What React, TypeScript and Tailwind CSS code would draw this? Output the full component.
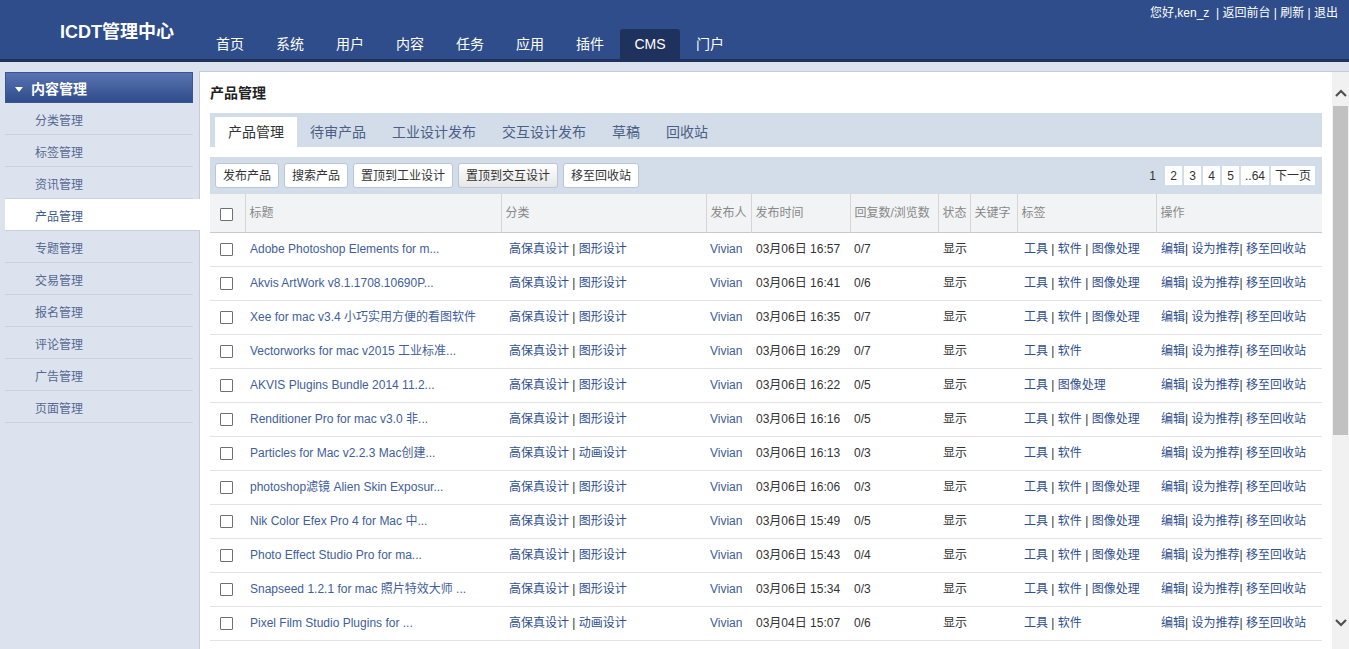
import React from "react";

const navItems = ["首页", "系统", "用户", "内容", "任务", "应用", "插件", "CMS", "门户"];
const sideItems = ["分类管理", "标签管理", "资讯管理", "产品管理", "专题管理", "交易管理", "报名管理", "评论管理", "广告管理", "页面管理"];
const tabs = ["产品管理", "待审产品", "工业设计发布", "交互设计发布", "草稿", "回收站"];
const buttons = ["发布产品", "搜索产品", "置顶到工业设计", "置顶到交互设计", "移至回收站"];

const rows = [
  { t: "Adobe Photoshop Elements for m...", c: ["高保真设计", "图形设计"], d: "03月06日 16:57", n: "0/7", tags: ["工具", "软件", "图像处理"] },
  { t: "Akvis ArtWork v8.1.1708.10690P...", c: ["高保真设计", "图形设计"], d: "03月06日 16:41", n: "0/6", tags: ["工具", "软件", "图像处理"] },
  { t: "Xee for mac v3.4 小巧实用方便的看图软件", c: ["高保真设计", "图形设计"], d: "03月06日 16:35", n: "0/7", tags: ["工具", "软件", "图像处理"] },
  { t: "Vectorworks for mac v2015 工业标准...", c: ["高保真设计", "图形设计"], d: "03月06日 16:29", n: "0/7", tags: ["工具", "软件"] },
  { t: "AKVIS Plugins Bundle 2014 11.2...", c: ["高保真设计", "图形设计"], d: "03月06日 16:22", n: "0/5", tags: ["工具", "图像处理"] },
  { t: "Renditioner Pro for mac v3.0 非...", c: ["高保真设计", "图形设计"], d: "03月06日 16:16", n: "0/5", tags: ["工具", "软件", "图像处理"] },
  { t: "Particles for Mac v2.2.3 Mac创建...", c: ["高保真设计", "动画设计"], d: "03月06日 16:13", n: "0/3", tags: ["工具", "软件"] },
  { t: "photoshop滤镜 Alien Skin Exposur...", c: ["高保真设计", "图形设计"], d: "03月06日 16:06", n: "0/3", tags: ["工具", "软件", "图像处理"] },
  { t: "Nik Color Efex Pro 4 for Mac 中...", c: ["高保真设计", "图形设计"], d: "03月06日 15:49", n: "0/5", tags: ["工具", "软件", "图像处理"] },
  { t: "Photo Effect Studio Pro for ma...", c: ["高保真设计", "图形设计"], d: "03月06日 15:43", n: "0/4", tags: ["工具", "软件", "图像处理"] },
  { t: "Snapseed 1.2.1 for mac 照片特效大师 ...", c: ["高保真设计", "图形设计"], d: "03月06日 15:34", n: "0/3", tags: ["工具", "软件", "图像处理"] },
  { t: "Pixel Film Studio Plugins for ...", c: ["高保真设计", "动画设计"], d: "03月04日 15:07", n: "0/6", tags: ["工具", "软件"] },
];

const cols = [
  { label: "", w: "w-[35px]" },
  { label: "标题", w: "w-[256px]" },
  { label: "分类", w: "w-[205px]" },
  { label: "发布人", w: "w-[45px]" },
  { label: "发布时间", w: "w-[99px]" },
  { label: "回复数/浏览数", w: "w-[88px]" },
  { label: "状态", w: "w-[32px]" },
  { label: "关键字", w: "w-[47px]" },
  { label: "标签", w: "w-[139px]" },
  { label: "操作", w: "w-[166px]" },
];

function Box() {
  return <span className="inline-block h-[13px] w-[13px] rounded-[1px] border border-[#707070] bg-white align-middle" />;
}

function Joined({ items }: { items: string[] }) {
  return (
    <>
      {items.map((s, i) => (
        <React.Fragment key={i}>
          {i > 0 && <span className="text-[#333]"> | </span>}
          <span>{s}</span>
        </React.Fragment>
      ))}
    </>
  );
}

function Chevron({ up }: { up?: boolean }) {
  return (
    <svg viewBox="0 0 12 8" className="h-[8px] w-[12px]" fill="none" stroke="#505050" strokeWidth="2.2">
      <path d={up ? "M1 7l5-5 5 5" : "M1 1l5 5 5-5"} />
    </svg>
  );
}

export default function App() {
  return (
    <div className="flex h-[649px] w-[1349px] flex-col overflow-hidden bg-[#dde3ee] font-['Liberation_Sans','Noto_Sans_CJK_SC',sans-serif] text-[12px] text-[#333]">
      {/* Header */}
      <header className="flex h-[62px] shrink-0 border-b-[3px] border-[#1f325d] bg-[#2e4d8a]">
        <div className="w-[200px] shrink-0 pl-[60px] pt-[20px] text-[18px] font-bold leading-[24px] text-white">ICDT管理中心</div>
        <nav className="flex self-end">
          {navItems.map((n) => (
            <div
              key={n}
              className={`flex h-[30px] w-[60px] items-center justify-center rounded-t-[3px] text-[14px] text-white ${n === "CMS" ? "bg-[#1f325d]" : ""}`}
            >
              {n}
            </div>
          ))}
        </nav>
        <div className="ml-auto self-start pr-[11px] pt-[5px] leading-[16px] text-white">
          您好,ken_z&nbsp; | 返回前台 | 刷新 | 退出
        </div>
      </header>

      {/* Body */}
      <div className="flex min-h-0 flex-1 pt-[9px]">
        {/* Sidebar */}
        <aside className="relative z-10 w-[199px] shrink-0 pl-[5px] pt-[1px]">
          <div className="flex h-[31px] w-[188px] items-center border border-[#3a5592] bg-gradient-to-b from-[#5974b0] to-[#2f4c8b] pl-[9px] pt-[3px] text-[14px] font-bold text-white">
            <svg viewBox="0 0 8 5" className="mr-[8px] h-[5px] w-[8px]" fill="#fff">
              <path d="M0 0h8L4 5z" />
            </svg>
            内容管理
          </div>
          {sideItems.map((s) => (
            <div
              key={s}
              className={`flex h-[32px] items-center border-b border-[#c9d1df] pl-[30px] pt-[4px] ${
                s === "产品管理" ? "w-[195px] bg-white text-[#3d5a8c]" : "w-[188px] text-[#556891]"
              }`}
            >
              {s}
            </div>
          ))}
        </aside>

        {/* Main panel */}
        <main className="flex min-w-0 flex-1 border-l border-t border-[#c3cbd8] bg-white">
          <div className="min-w-0 flex-1 px-[10px]">
            <div className="flex h-[41px] items-center pt-[1px] text-[14px] font-bold text-[#222]">产品管理</div>

            <div className="flex h-[34px] items-end bg-[#d3dce9] pl-[5px]">
              {tabs.map((t, i) => (
                <div
                  key={t}
                  className={`flex h-[30px] items-center px-[13px] pt-[1px] text-[14px] ${i === 0 ? "bg-white text-[#333]" : "text-[#4b5f86]"}`}
                >
                  {t}
                </div>
              ))}
            </div>

            <div className="mt-[10px] flex h-[37px] items-center justify-between bg-[#d3dce9] px-[5px]">
              <div className="flex gap-[5px]">
                {buttons.map((b, i) => (
                  <div
                    key={b}
                    className={`flex h-[25px] items-center rounded-[3px] border border-[#b9c5d9] px-[7px] ${
                      i === 3 ? "bg-gradient-to-b from-white to-[#e6e6e6]" : "bg-white"
                    }`}
                  >
                    {b}
                  </div>
                ))}
              </div>
              <div className="mr-[2px] flex items-center gap-[2px]">
                <span className="mr-[7px]">1</span>
                {["2", "3", "4", "5", "..64", "下一页"].map((p) => (
                  <span key={p} className="flex h-[19px] min-w-[17px] items-center justify-center bg-white px-[4px]">
                    {p}
                  </span>
                ))}
              </div>
            </div>

            <table className="w-full table-fixed border-collapse">
              <thead>
                <tr className="h-[38px] border-b border-[#c8c8c8] bg-[#f2f3f5] text-left text-[#888]">
                  {cols.map((c, i) => (
                    <th
                      key={i}
                      className={`${c.w} overflow-visible whitespace-nowrap border-l border-[#d5d5d5] pt-[1px] font-normal first:border-l-0 ${
                        i === 0 ? "pl-[10px]" : "pl-[4px]"
                      }`}
                    >
                      {i === 0 ? <Box /> : c.label}
                    </th>
                  ))}
                </tr>
              </thead>
              <tbody>
                {rows.map((r, i) => (
                  <tr key={i} className="h-[34px] border-b border-[#e3e3e3]">
                    <td className="pl-[10px]">
                      <Box />
                    </td>
                    <td className="truncate px-[5px] text-[#41609b]">{r.t}</td>
                    <td className="pl-[8px] text-[#2f4f8f]">
                      <Joined items={r.c} />
                    </td>
                    <td className="pl-[4px] text-[#3e5c9a]">Vivian</td>
                    <td className="pl-[5px]">{r.d}</td>
                    <td className="pl-[4px]">{r.n}</td>
                    <td className="pl-[5px]">显示</td>
                    <td></td>
                    <td className="pl-[7px] text-[#2f4f8f]">
                      <Joined items={r.tags} />
                    </td>
                    <td className="whitespace-nowrap pl-[5px] text-[#2f4f8f]">
                      编辑<span className="text-[#333]">|</span> 设为推荐<span className="text-[#333]">|</span> 移至回收站
                    </td>
                  </tr>
                ))}
              </tbody>
            </table>
          </div>

          {/* Scrollbar */}
          <div className="flex w-[17px] shrink-0 flex-col bg-[#f1f1f1]">
            <div className="flex h-[34px] justify-center pt-[17px]">
              <Chevron up />
            </div>
            <div className="mx-[1px] h-[329px] bg-[#c1c1c1]" />
            <div className="flex-1" />
            <div className="flex h-[40px] justify-center pt-[10px]">
              <Chevron />
            </div>
          </div>
        </main>
      </div>
    </div>
  );
}
